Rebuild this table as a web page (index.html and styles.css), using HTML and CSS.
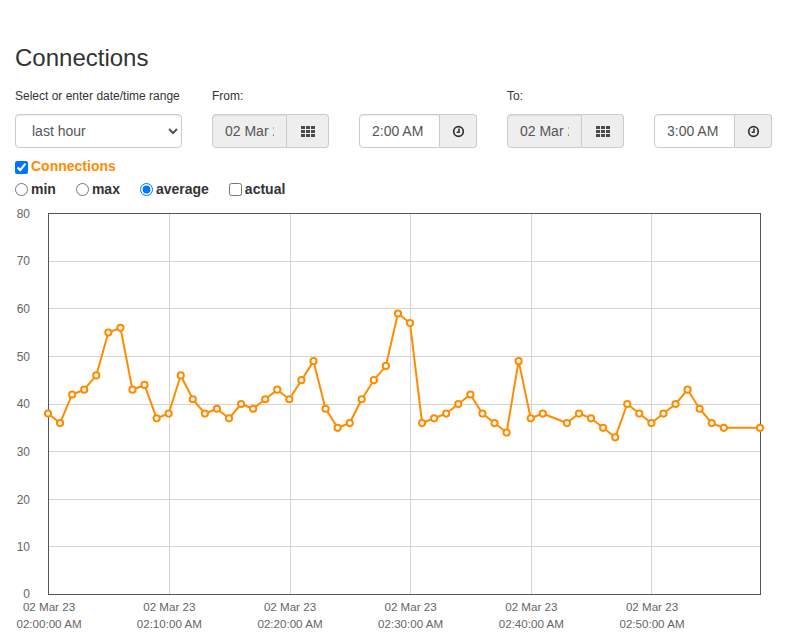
FILE: index.html
```html
<!DOCTYPE html>
<html>
<head>
<meta charset="utf-8">
<title>Connections</title>
<link rel="stylesheet" href="styles.css">
</head>
<body>
<div class="page">
  <h3 class="title">Connections</h3>
  <div class="range-row">
    <div class="field f-range">
      <div class="lbl">Select or enter date/time range</div>
      <select class="ctl select"><option>last hour</option></select>
    </div>
    <div class="field f-date">
      <div class="lbl">From:</div>
      <div class="igroup">
        <input class="ctl ig-input ro" value="02 Mar 2023" readonly>
        <span class="addon addon-date"><svg class="ico-grid" width="14" height="11" viewBox="0 0 14 11"><rect x="0" y="0" width="4" height="3"/><rect x="5" y="0" width="4" height="3"/><rect x="10" y="0" width="4" height="3"/><rect x="0" y="4" width="4" height="3"/><rect x="5" y="4" width="4" height="3"/><rect x="10" y="4" width="4" height="3"/><rect x="0" y="8" width="4" height="3"/><rect x="5" y="8" width="4" height="3"/><rect x="10" y="8" width="4" height="3"/></svg></span>
      </div>
    </div>
    <div class="field f-time">
      <div class="lbl">&nbsp;</div>
      <div class="igroup">
        <input class="ctl ig-input" value="2:00 AM">
        <span class="addon addon-time"><svg class="ico-clock" width="13" height="13" viewBox="0 0 13 13"><circle cx="6.5" cy="6.5" r="4.8"/><path d="M7 3.4V7.2H4.6"/></svg></span>
      </div>
    </div>
    <div class="field f-date">
      <div class="lbl">To:</div>
      <div class="igroup">
        <input class="ctl ig-input ro" value="02 Mar 2023" readonly>
        <span class="addon addon-date"><svg class="ico-grid" width="14" height="11" viewBox="0 0 14 11"><rect x="0" y="0" width="4" height="3"/><rect x="5" y="0" width="4" height="3"/><rect x="10" y="0" width="4" height="3"/><rect x="0" y="4" width="4" height="3"/><rect x="5" y="4" width="4" height="3"/><rect x="10" y="4" width="4" height="3"/><rect x="0" y="8" width="4" height="3"/><rect x="5" y="8" width="4" height="3"/><rect x="10" y="8" width="4" height="3"/></svg></span>
      </div>
    </div>
    <div class="field f-time">
      <div class="lbl">&nbsp;</div>
      <div class="igroup">
        <input class="ctl ig-input" value="3:00 AM">
        <span class="addon addon-time"><svg class="ico-clock" width="13" height="13" viewBox="0 0 13 13"><circle cx="6.5" cy="6.5" r="4.8"/><path d="M7 3.4V7.2H4.6"/></svg></span>
      </div>
    </div>
  </div>
  <div class="series">
    <label class="chk"><input type="checkbox" checked><span class="series-name">Connections</span></label>
  </div>
  <div class="modes">
    <label class="opt"><input type="radio" name="mode">min</label>
    <label class="opt"><input type="radio" name="mode">max</label>
    <label class="opt"><input type="radio" name="mode" checked>average</label>
    <label class="opt"><input type="checkbox">actual</label>
  </div>
</div>
<svg class="chart" width="787" height="434" viewBox="0 200 787 434">
  <defs>
    <marker id="dot" markerUnits="userSpaceOnUse" markerWidth="10" markerHeight="10" refX="5" refY="5" viewBox="0 0 10 10">
      <circle class="dot" cx="5" cy="5" r="3.1"/>
    </marker>
  </defs>
  <g class="grid">
    <line x1="48" y1="261.5" x2="760" y2="261.5"/>
    <line x1="48" y1="308.5" x2="760" y2="308.5"/>
    <line x1="48" y1="356.5" x2="760" y2="356.5"/>
    <line x1="48" y1="404.5" x2="760" y2="404.5"/>
    <line x1="48" y1="451.5" x2="760" y2="451.5"/>
    <line x1="48" y1="499.5" x2="760" y2="499.5"/>
    <line x1="48" y1="546.5" x2="760" y2="546.5"/>
    <line x1="169.5" y1="213" x2="169.5" y2="594"/>
    <line x1="290.5" y1="213" x2="290.5" y2="594"/>
    <line x1="410.5" y1="213" x2="410.5" y2="594"/>
    <line x1="531.5" y1="213" x2="531.5" y2="594"/>
    <line x1="651.5" y1="213" x2="651.5" y2="594"/>
  </g>
  <rect class="frame" x="48.5" y="213.5" width="712" height="381"/>
  <g class="ylab">
    <text x="30" y="217.5">80</text>
    <text x="30" y="265.3">70</text>
    <text x="30" y="312.8">60</text>
    <text x="30" y="360.5">50</text>
    <text x="30" y="408.2">40</text>
    <text x="30" y="455.8">30</text>
    <text x="30" y="503.5">20</text>
    <text x="30" y="551">10</text>
    <text x="30" y="598.3">0</text>
  </g>
  <g class="xlab">
    <text x="49" y="611">02 Mar 23</text><text x="49" y="627.5">02:00:00 AM</text>
    <text x="169.3" y="611">02 Mar 23</text><text x="169.3" y="627.5">02:10:00 AM</text>
    <text x="290" y="611">02 Mar 23</text><text x="290" y="627.5">02:20:00 AM</text>
    <text x="410.6" y="611">02 Mar 23</text><text x="410.6" y="627.5">02:30:00 AM</text>
    <text x="531.3" y="611">02 Mar 23</text><text x="531.3" y="627.5">02:40:00 AM</text>
    <text x="652" y="611">02 Mar 23</text><text x="652" y="627.5">02:50:00 AM</text>
  </g>
  <polyline class="series-line" marker-start="url(#dot)" marker-mid="url(#dot)" marker-end="url(#dot)" points="48,413.53 60.07,423.05 72.14,394.48 84.2,389.71 96.27,375.43 108.34,332.56 120.41,327.8 132.47,389.71 144.54,384.95 156.61,418.29 168.68,413.53 180.75,375.43 192.81,399.24 204.88,413.53 216.95,408.76 229.02,418.29 241.08,404 253.15,408.76 265.22,399.24 277.29,389.71 289.36,399.24 301.42,380.19 313.49,361.14 325.56,408.76 337.63,427.81 349.69,423.05 361.76,399.24 373.83,380.19 385.9,365.9 397.97,313.51 410.03,323.04 422.1,423.05 434.17,418.29 446.24,413.53 458.31,404 470.37,394.48 482.44,413.53 494.51,423.05 506.58,432.58 518.64,361.14 530.71,418.29 542.78,413.53 566.92,423.05 578.98,413.53 591.05,418.29 603.12,427.81 615.19,437.34 627.25,404 639.32,413.53 651.39,423.05 663.46,413.53 675.53,404 687.59,389.71 699.66,408.76 711.73,423.05 723.8,427.81 760,427.81"/>
</svg>
</body>
</html>
```

FILE: styles.css
```css
html, body {
  margin: 0;
  padding: 0;
  background: #fff;
}
body {
  font-family: "Liberation Sans", Arial, Helvetica, sans-serif;
  font-size: 14px;
  color: #333;
  width: 787px;
  overflow: hidden;
}
.page {
  padding: 44px 15px 0;
}
.title {
  margin: 0 0 16px;
  font-size: 24px;
  line-height: 28px;
  font-weight: 400;
  color: #333;
}
.range-row {
  display: flex;
  gap: 30px;
}
.field {
  display: flex;
  flex-direction: column;
}
.f-range { width: 167px; }
.f-date { width: 117px; }
.f-time { width: 118px; }
.lbl {
  font-size: 12px;
  line-height: 17px;
  margin-bottom: 9px;
  color: #333;
}
.ctl {
  box-sizing: border-box;
  height: 34px;
  font-family: "Liberation Sans", Arial, Helvetica, sans-serif;
  font-size: 14px;
  color: #555;
  border: 1px solid #ccc;
  border-radius: 4px;
  background: #fff;
  box-shadow: inset 0 1px 1px rgba(0,0,0,.075);
  margin: 0;
}
.select {
  width: 167px;
  padding: 6px 8px 6px 12px;
}
.igroup {
  display: flex;
  height: 34px;
}
.ig-input {
  flex: 1;
  min-width: 0;
  width: 10px;
  padding: 6px 12px;
  border-top-right-radius: 0;
  border-bottom-right-radius: 0;
  outline: none;
}
.ro {
  background: #eee;
}
.addon {
  box-sizing: border-box;
  display: flex;
  align-items: center;
  justify-content: center;
  height: 34px;
  background: #eee;
  border: 1px solid #ccc;
  border-left: 0;
  border-radius: 0 4px 4px 0;
  color: #555;
}
.addon-date { width: 42px; }
.addon-time { width: 37px; }
.ico-grid rect { fill: #4a4a4a; }
.ico-clock circle {
  fill: none;
  stroke: #333;
  stroke-width: 1.7;
}
.ico-clock path {
  fill: none;
  stroke: #333;
  stroke-width: 1.6;
}
.series {
  margin-top: 8px;
  height: 20px;
  display: flex;
  align-items: center;
}
.chk {
  display: flex;
  align-items: center;
  font-weight: 700;
  line-height: 20px;
}
.chk input {
  margin: 2px 3px 0 0;
  width: 13px;
  height: 13px;
}
.series-name {
  color: #ff8c00;
}
.modes {
  margin-top: 3px;
  height: 20px;
  display: flex;
  gap: 20px;
}
.opt {
  display: flex;
  align-items: center;
  font-weight: 700;
  line-height: 20px;
  color: #333;
}
.opt input {
  margin: 0 3px 0 0;
  width: 13px;
  height: 13px;
}
.chart {
  display: block;
  margin-top: 1px;
}
.grid line {
  stroke: #d4d4d4;
  stroke-width: 1;
}
.frame {
  fill: none;
  stroke: #555;
  stroke-width: 1;
}
.ylab text {
  font-family: "Liberation Sans", Arial, sans-serif;
  font-size: 12px;
  fill: #666;
  text-anchor: end;
}
.xlab text {
  font-family: "Liberation Sans", Arial, sans-serif;
  font-size: 11.6px;
  fill: #666;
  text-anchor: middle;
}
.series-line {
  fill: none;
  stroke: #ff8c00;
  stroke-width: 2;
  stroke-linejoin: round;
}
.dot {
  fill: #fff;
  stroke: #ff8c00;
  stroke-width: 2;
}
```
